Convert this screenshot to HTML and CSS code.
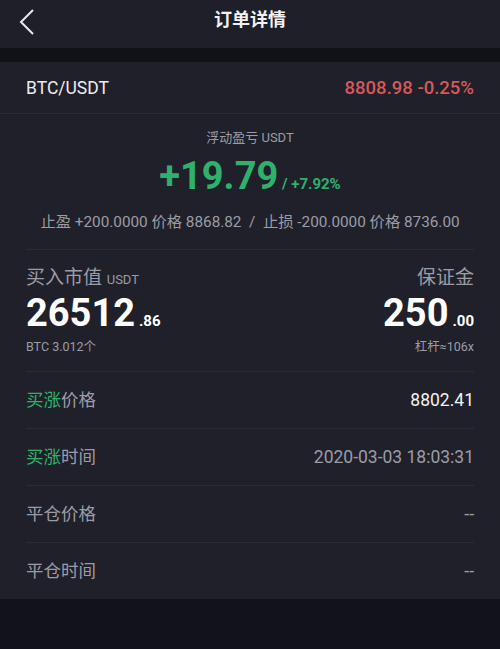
FILE: index.html
```html
<!DOCTYPE html>
<html lang="zh-CN">
  <head>
    <meta charset="UTF-8" />
    <title>订单详情</title>
    <link rel="stylesheet" href="styles.css">
  </head>
  <body>
    <!-- 顶部导航 -->
    <div class="nav">
      <svg class="back" width="16" height="26" viewBox="0 0 16 26">
        <polyline points="14,1 2,13 14,25" fill="none" stroke="#e8e8ec" stroke-width="2" />
      </svg>
      <h1>订单详情</h1>
    </div>

    <div class="gap"></div>

    <div class="detail">
      <div class="pair">
        <span class="pair-name">BTC/USDT</span>
        <span class="pair-price">8808.98 -0.25%</span>
      </div>

      <!-- 浮动盈亏 -->
      <div class="pnl">
        <p class="pnl-label">浮动盈亏 USDT</p>
        <p class="pnl-value">+19.79<span class="pnl-rate"> / +7.92%</span></p>
        <p class="pnl-stop">止盈 +200.0000 价格 8868.82 &nbsp;/&nbsp; 止损 -200.0000 价格 8736.00</p>
      </div>

      <!-- 市值 / 保证金 -->
      <div class="amounts">
        <div class="amount">
          <p class="amount-label">买入市值 <small>USDT</small></p>
          <p class="amount-value">26512<span>.86</span></p>
          <p class="amount-sub">BTC 3.012个</p>
        </div>
        <div class="amount right">
          <p class="amount-label">保证金</p>
          <p class="amount-value">250<span>.00</span></p>
          <p class="amount-sub">杠杆≈106x</p>
        </div>
      </div>

      <div class="row">
        <span class="row-label"><em>买涨</em>价格</span>
        <span class="row-value white">8802.41</span>
      </div>
      <div class="row">
        <span class="row-label"><em>买涨</em>时间</span>
        <span class="row-value">2020-03-03 18:03:31</span>
      </div>
      <div class="row">
        <span class="row-label">平仓价格</span>
        <span class="row-value">--</span>
      </div>
      <div class="row last">
        <span class="row-label">平仓时间</span>
        <span class="row-value">--</span>
      </div>
    </div>
  </body>
</html>
```

FILE: styles.css
```css
html,
body {
  margin: 0;
  height: 100%;
}

body {
  font-family: Roboto, "Noto Sans CJK SC", sans-serif;
  background-color: #12121a;
  color: #9c9ca6;
}

p {
  margin: 0;
}

.nav {
  height: 48px;
  box-sizing: border-box;
  padding-bottom: 8px;
  display: flex;
  align-items: center;
  justify-content: center;
  position: relative;
  background-color: #1f1f29;
}

.nav h1 {
  margin: 0;
  font-size: 18px;
  line-height: 24px;
  font-weight: bold;
  color: #f2f2f4;
}

.back {
  position: absolute;
  left: 19px;
  top: 9px;
}

.gap {
  height: 14px;
  background-color: #111118;
}

.detail {
  background-color: #20202a;
}

.pair {
  height: 51px;
  display: flex;
  align-items: center;
  justify-content: space-between;
  padding: 0 26px;
  border-bottom: 1px solid #2c2c36;
  font-size: 17.5px;
  line-height: 20px;
}

.pair-name {
  color: #ececf0;
}

.pair-price {
  color: #d25a5e;
  font-size: 18.5px;
  font-weight: 500;
}

/* 浮动盈亏 */
.pnl {
  margin: 0 26px;
  padding: 16px 0 17px;
  text-align: center;
  border-bottom: 1px solid #2c2c36;
}

.pnl-label {
  font-size: 13px;
  line-height: 16px;
}

.pnl-value {
  margin-top: 8px;
  font-size: 38px;
  line-height: 44px;
  height: 44px;
  font-weight: bold;
  color: #2fb06d;
}

.pnl-rate {
  font-size: 15px;
  line-height: 1;
}

.pnl-stop {
  margin-top: 14px;
  font-size: 15.3px;
  line-height: 20px;
  white-space: nowrap;
}

/* 市值 / 保证金 */
.amounts {
  margin: 0 26px;
  padding: 16px 0;
  display: flex;
  justify-content: space-between;
  border-bottom: 1px solid #2c2c36;
}

.amount.right {
  text-align: right;
}

.amount-label {
  font-size: 19px;
  line-height: 24px;
  height: 24px;
}

.amount-label small {
  font-size: 13px;
  line-height: 1;
}

.amount-value {
  margin-top: 1px;
  font-size: 38px;
  line-height: 44px;
  height: 44px;
  font-weight: bold;
  color: #fff;
}

.amount-value span {
  font-size: 15px;
  line-height: 1;
  margin-left: 4px;
}

.amount-sub {
  margin-top: 4px;
  font-size: 12.5px;
  line-height: 16px;
}

/* 明细行 */
.row {
  height: 56px;
  margin: 0 26px;
  display: flex;
  align-items: center;
  justify-content: space-between;
  border-bottom: 1px solid #2c2c36;
  font-size: 17.5px;
  line-height: 20px;
}

.row.last {
  border-bottom: none;
}

.row-label em {
  font-style: normal;
  color: #2fb06d;
}

.row-value.white {
  color: #f2f2f4;
}
```
